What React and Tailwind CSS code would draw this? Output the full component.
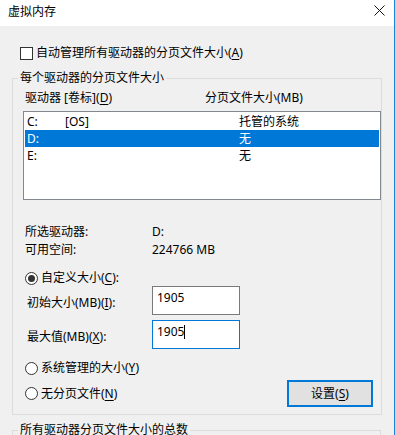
import React from "react";

const font = { fontFamily: '"Noto Sans", "Noto Sans CJK SC", sans-serif' };

function Key({ children }) {
  return <span className="underline underline-offset-2">{children}</span>;
}

function Radio({ checked, children }) {
  return (
    <div className="flex items-center h-[16px] ml-[12px]">
      <span className="w-[13px] h-[13px] rounded-full border border-[#333] bg-white flex items-center justify-center">
        {checked && <span className="w-[7px] h-[7px] rounded-full bg-[#333]" />}
      </span>
      <span className="ml-[3px]">{children}</span>
    </div>
  );
}

function SizeField({ label, value, focused }) {
  return (
    <div className="flex">
      <div className="w-[139px] pl-[14px] pt-[9px] leading-[16px]">{label}</div>
      <div
        className={`w-[88px] h-[29px] bg-white border px-[4px] pt-[3px] leading-[16px] flex items-start ${
          focused ? "border-[#0078d7]" : "border-[#7a7a7a]"
        }`}
      >
        <span>{value}</span>
        {focused && <span className="w-px h-[14px] bg-black mt-[1px]" />}
      </div>
    </div>
  );
}

const drives = [
  { letter: "C:", label: "[OS]", size: "托管的系统" },
  { letter: "D:", label: "", size: "无", selected: true },
  { letter: "E:", label: "", size: "无" },
];

export default function App() {
  return (
    <div
      style={font}
      className="w-[395px] h-[435px] overflow-hidden bg-[#f0f0f0] border-r border-[#1883d7] text-[12px] text-black"
    >
      {/* title bar */}
      <div className="h-[26px] bg-white flex justify-between pl-[8px] pr-[9px]">
        <div className="mt-[4px] leading-[16px]">虚拟内存</div>
        <svg width="11" height="11" viewBox="0 0 11 11" className="mt-[5px]">
          <path d="M0.5 0.5 L10.5 10.5 M10.5 0.5 L0.5 10.5" stroke="#111" strokeWidth="1" />
        </svg>
      </div>

      <div className="flex items-center h-[16px] mt-[19px] ml-[20px]">
        <span className="w-[13px] h-[13px] border border-[#333] bg-white" />
        <span className="ml-[3px]">
          自动管理所有驱动器的分页文件大小(<Key>A</Key>)
        </span>
      </div>

      <fieldset className="ml-[12px] w-[369px] mt-[9px] border border-[#dcdcdc] pb-[7px]">
        <legend className="ml-[5px] px-[2px] leading-[16px]">每个驱动器的分页文件大小</legend>

        <div className="flex mt-[4px] leading-[16px] pl-[12px]">
          <span className="w-[180px]">
            驱动器 [卷标](<Key>D</Key>)
          </span>
          <span>分页文件大小(MB)</span>
        </div>

        <div className="ml-[10px] w-[358px] h-[89px] mt-[5px] bg-white border border-[#828790] pt-[1px] px-[1px]">
          {drives.map((d) => (
            <div
              key={d.letter}
              className={`flex h-[17px] items-center pl-[2px] ${
                d.selected ? "bg-[#0078d7] text-white" : ""
              }`}
            >
              <span className="w-[38px]">{d.letter}</span>
              <span className="w-[174px]">{d.label}</span>
              <span>{d.size}</span>
            </div>
          ))}
        </div>

        <div className="mt-[23px] pl-[12px] leading-[18px]">
          <div className="flex">
            <span className="w-[127px]">所选驱动器:</span>
            <span>D:</span>
          </div>
          <div className="flex">
            <span className="w-[127px]">可用空间:</span>
            <span>224766 MB</span>
          </div>
        </div>

        <div className="mt-[11px]">
          <Radio checked>
            自定义大小(<Key>C</Key>):
          </Radio>
        </div>

        <SizeField
          label={
            <>
              初始大小(MB)(<Key>I</Key>):
            </>
          }
          value="1905"
        />
        <div className="mt-[5px]">
          <SizeField
            label={
              <>
                最大值(MB)(<Key>X</Key>):
              </>
            }
            value="1905"
            focused
          />
        </div>

        <div className="mt-[11px]">
          <Radio>
            系统管理的大小(<Key>Y</Key>)
          </Radio>
        </div>

        <div className="flex items-center justify-between mt-[4px] h-[27px] pr-[8px]">
          <Radio>
            无分页文件(<Key>N</Key>)
          </Radio>
          <button className="w-[86px] h-[27px] border-2 border-[#0078d7] bg-[#e1e1e1] leading-[16px]">
            设置(<Key>S</Key>)
          </button>
        </div>
      </fieldset>

      <fieldset className="ml-[12px] w-[369px] mt-[7px] border border-[#dcdcdc] h-[40px]">
        <legend className="ml-[5px] px-[2px] leading-[16px]">所有驱动器分页文件大小的总数</legend>
      </fieldset>
    </div>
  );
}
